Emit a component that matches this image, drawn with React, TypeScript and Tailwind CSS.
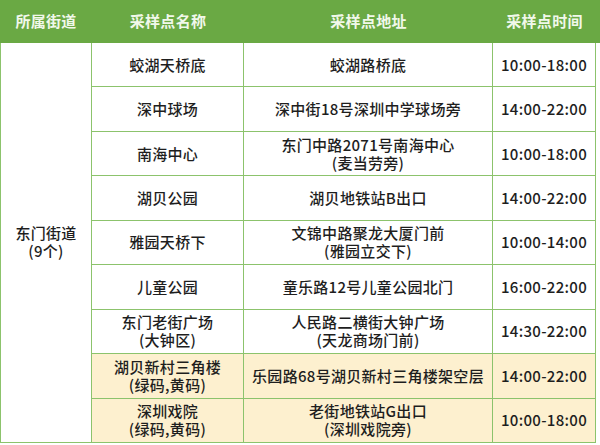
import React from "react";

const rows: { name: string[]; addr: string[]; time: string; yellow?: boolean }[] = [
  { name: ["蛟湖天桥底"], addr: ["蛟湖路桥底"], time: "10:00-18:00" },
  { name: ["深中球场"], addr: ["深中街18号深圳中学球场旁"], time: "14:00-22:00" },
  { name: ["南海中心"], addr: ["东门中路2071号南海中心", "(麦当劳旁)"], time: "10:00-18:00" },
  { name: ["湖贝公园"], addr: ["湖贝地铁站B出口"], time: "14:00-22:00" },
  { name: ["雅园天桥下"], addr: ["文锦中路聚龙大厦门前", "(雅园立交下)"], time: "10:00-14:00" },
  { name: ["儿童公园"], addr: ["童乐路12号儿童公园北门"], time: "16:00-22:00" },
  { name: ["东门老街广场", "(大钟区)"], addr: ["人民路二横街大钟广场", "(天龙商场门前)"], time: "14:30-22:00" },
  { name: ["湖贝新村三角楼", "(绿码,黄码)"], addr: ["乐园路68号湖贝新村三角楼架空层"], time: "14:00-22:00", yellow: true },
  { name: ["深圳戏院", "(绿码,黄码)"], addr: ["老街地铁站G出口", "(深圳戏院旁)"], time: "10:00-18:00", yellow: true },
];

function Lines({ lines }: { lines: string[] }) {
  return (
    <div className="text-center leading-[18px]">
      {lines.map((l, i) => (
        <div key={i}>{l}</div>
      ))}
    </div>
  );
}

export default function App() {
  const cell = "flex items-center justify-center border-r border-b border-[#8cc36c]";
  return (
    <div
      className="w-[600px] h-[445px] bg-white text-[15px] text-[#1e1e1e] font-medium tracking-[0.3px] overflow-hidden"
      style={{ fontFamily: '"Noto Sans CJK SC", "Noto Sans", sans-serif' }}
    >
      <div className="flex h-[43px] bg-[#6aa944] text-[#f1f8ea] font-semibold">
        <div className="w-[92px] flex items-center justify-center">所属街道</div>
        <div className="w-[152px] flex items-center justify-center">采样点名称</div>
        <div className="w-[249px] flex items-center justify-center">采样点地址</div>
        <div className="w-[103px] flex items-center justify-center">采样点时间</div>
      </div>
      <div className="grid grid-cols-[92px_152px_249px_103px] grid-rows-[repeat(9,minmax(0,1fr))] h-[400px] w-[596px]">
        <div className={`${cell} border-l row-span-9 row-start-1 col-start-1`}>
          <Lines lines={["东门街道", "(9个)"]} />
        </div>
        {rows.map((r, i) => {
          const bg = r.yellow ? "bg-[#fdf0cf]" : "bg-white";
          return (
            <React.Fragment key={i}>
              <div className={`${cell} ${bg} col-start-2`}>
                <Lines lines={r.name} />
              </div>
              <div className={`${cell} ${bg} col-start-3`}>
                <Lines lines={r.addr} />
              </div>
              <div className={`${cell} ${bg} col-start-4`}>
                <Lines lines={[r.time]} />
              </div>
            </React.Fragment>
          );
        })}
      </div>
    </div>
  );
}
